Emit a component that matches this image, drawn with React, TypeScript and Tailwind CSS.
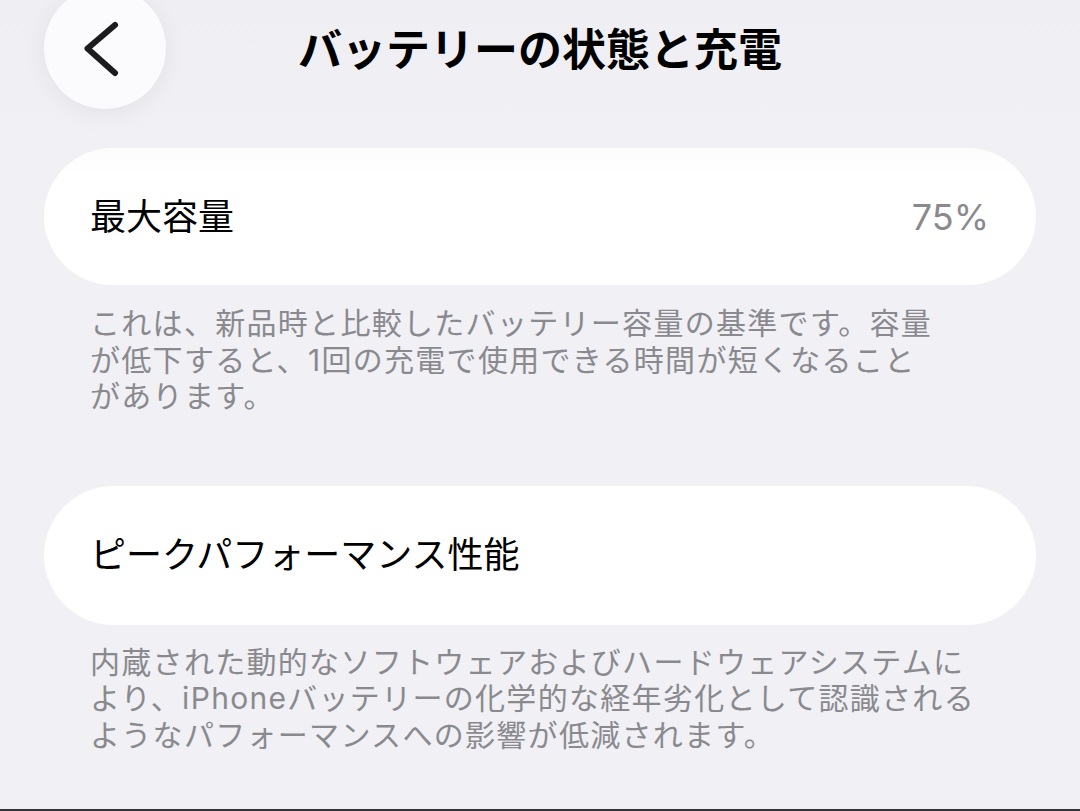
import React from "react";

const FONT = '"Inter", "Noto Sans CJK JP", "Noto Sans", sans-serif';

function BackButton() {
  return (
    <button
      type="button"
      aria-label="戻る"
      className="w-[122px] h-[122px] rounded-full bg-[#fbfbfd] shadow-[0_4px_24px_rgba(0,0,0,0.06)] flex items-center justify-center"
    >
      <svg width="122" height="122" viewBox="0 0 122 122" fill="none">
        <polyline
          points="71,38 43.5,61.5 71,86"
          stroke="#1c1c1e"
          strokeWidth="6"
          strokeLinecap="round"
          strokeLinejoin="round"
        />
      </svg>
    </button>
  );
}

function Row({ label, value, h }: { label: string; value?: string; h: string }) {
  return (
    <div className={`${h} rounded-full bg-white flex items-center justify-between pl-[46px] pr-[47px]`}>
      <span className="text-[36px] text-black leading-none">{label}</span>
      {value && <span className="text-[36px] text-[#8a8a8e] leading-none">{value}</span>}
    </div>
  );
}

function Footnote({ lines, mt }: { lines: string[]; mt: string }) {
  return (
    <p className={`${mt} px-[46px] text-[30px] tracking-[1.3px] leading-[36.5px] text-[#8a8a8e]`}>
      {lines.map((l) => (
        <span key={l} className="block whitespace-nowrap">
          {l}
        </span>
      ))}
    </p>
  );
}

export default function App() {
  return (
    <div
      className="relative h-[811px] w-[1080px] overflow-hidden bg-[#f0f0f5] flex flex-col"
      style={{ fontFamily: FONT }}
    >
      {/* soft fade under the navigation bar */}
      <div className="pointer-events-none absolute inset-x-0 top-0 h-[178px] bg-gradient-to-b from-[#eeeef3] via-[#eeeef3]/40 to-transparent z-10" />

      <header className="relative z-20 -mt-[13px] h-[122px] px-[44px] grid grid-cols-[1fr_auto_1fr] items-center">
        <div className="flex">
          <BackButton />
        </div>
        <h1 className="text-[44px] font-bold text-black leading-none pt-[3px]">バッテリーの状態と充電</h1>
        <div />
      </header>

      <main className="px-[44px] mt-[39px]">
        <Row label="最大容量" value="75%" h="h-[137px]" />
        <Footnote
          mt="mt-[20px]"
          lines={[
            "これは、新品時と比較したバッテリー容量の基準です。容量",
            "が低下すると、1回の充電で使用できる時間が短くなること",
            "があります。",
          ]}
        />

        <div className="mt-[71px]">
          <Row label="ピークパフォーマンス性能" h="h-[139px]" />
        </div>
        <Footnote
          mt="mt-[19px]"
          lines={[
            "内蔵された動的なソフトウェアおよびハードウェアシステムに",
            "より、iPhoneバッテリーの化学的な経年劣化として認識される",
            "ようなパフォーマンスへの影響が低減されます。",
          ]}
        />
      </main>

      <div className="mt-auto h-[2px] bg-[#35353a]" />
    </div>
  );
}
